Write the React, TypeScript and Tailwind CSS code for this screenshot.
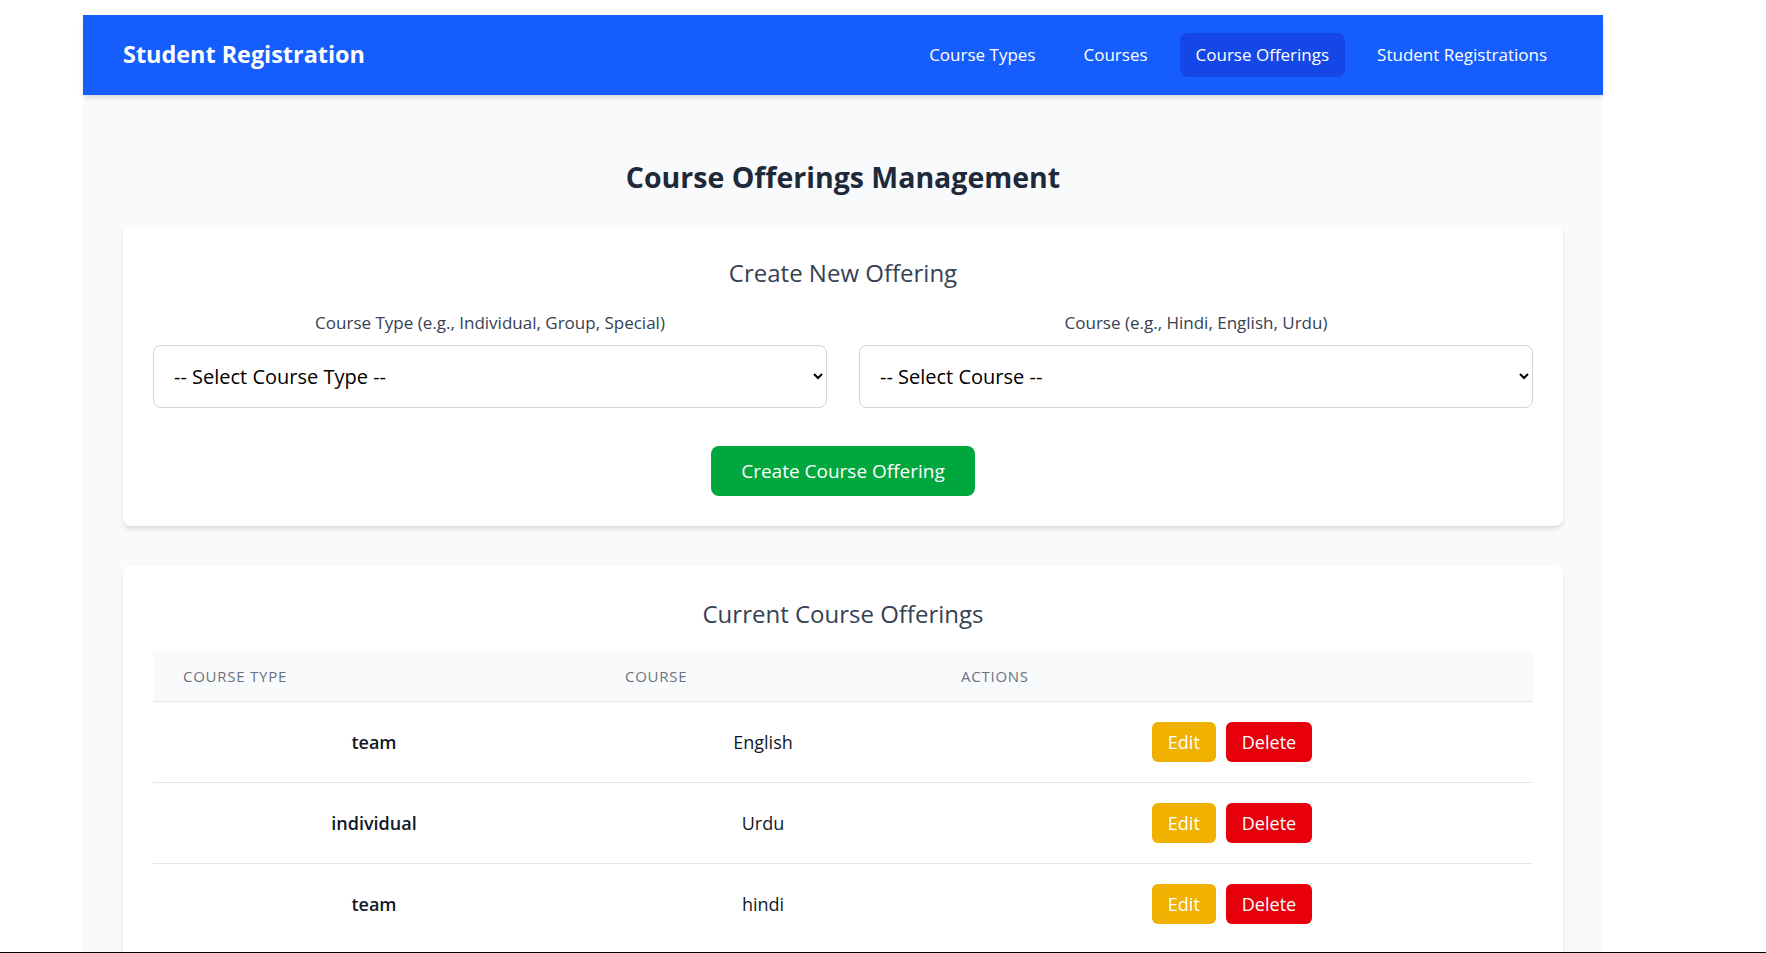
import React from "react";
import clsx from "clsx";

const navLinks = ["Course Types", "Courses", "Course Offerings", "Student Registrations"];

const offerings = [
    { type: "team", course: "English" },
    { type: "individual", course: "Urdu" },
    { type: "team", course: "hindi" },
];

const App: React.FC = () => {
    return (
        <div className="min-h-screen bg-white pl-[83px] pt-[15px] font-['Open_Sans',sans-serif]">
            <div className="w-[1520px] min-h-[938px] bg-gray-50">
                {/* top bar */}
                <nav className="mb-6 flex h-20 items-center justify-between bg-blue-600 px-10 shadow-md">
                    <h1 className="text-[23.4px] font-bold text-white">Student Registration</h1>
                    <ul className="flex items-center gap-4">
                        {navLinks.map((link) => (
                            <li key={link}>
                                <a
                                    href="#"
                                    className={clsx(
                                        "block rounded-lg px-4 py-2 text-[17px] leading-7 font-medium text-white",
                                        link === "Course Offerings" && "bg-blue-700"
                                    )}
                                >
                                    {link}
                                </a>
                            </li>
                        ))}
                    </ul>
                </nav>

                <main className="px-10 pt-10 pb-10">
                    <h2 className="mb-[30px] text-center text-[28.5px] leading-9 font-bold text-gray-800">
                        Course Offerings Management
                    </h2>

                    {/* create form */}
                    <section className="mb-10 rounded-lg bg-white px-[30px] pt-8 pb-[30px] shadow-md">
                        <h3 className="mb-5 text-center text-2xl font-medium text-gray-700">
                            Create New Offering
                        </h3>
                        <div className="grid grid-cols-2 gap-8">
                            <div>
                                <label className="mb-2 block text-center text-[17px] leading-7 font-medium text-gray-700">
                                    Course Type (e.g., Individual, Group, Special)
                                </label>
                                <select className="w-full rounded-lg border border-gray-300 bg-white p-4 text-xl text-black">
                                    <option>-- Select Course Type --</option>
                                </select>
                            </div>
                            <div>
                                <label className="mb-2 block text-center text-[17px] leading-7 font-medium text-gray-700">
                                    Course (e.g., Hindi, English, Urdu)
                                </label>
                                <select className="w-full rounded-lg border border-gray-300 bg-white p-4 text-xl text-black">
                                    <option>-- Select Course --</option>
                                </select>
                            </div>
                        </div>
                        <div className="mt-[38px] flex justify-center">
                            <button className="rounded-lg bg-green-600 px-[30px] py-[11px] text-[19px] leading-7 text-white">
                                Create Course Offering
                            </button>
                        </div>
                    </section>

                    {/* list */}
                    <section className="rounded-lg bg-white px-[30px] pt-8 pb-[30px] shadow-md">
                        <h3 className="mb-[21px] text-center text-2xl font-medium text-gray-700">
                            Current Course Offerings
                        </h3>
                        <table className="w-full">
                            <colgroup>
                                <col className="w-[442px]" />
                                <col className="w-[336px]" />
                                <col />
                            </colgroup>
                            <thead className="border-b border-gray-200 bg-gray-50">
                                <tr>
                                    <th className="px-[30px] py-[15px] text-left text-[15px] leading-5 font-medium uppercase tracking-wider text-gray-500">
                                        Course Type
                                    </th>
                                    <th className="px-[30px] py-[15px] text-left text-[15px] leading-5 font-medium uppercase tracking-wider text-gray-500">
                                        Course
                                    </th>
                                    <th className="px-[30px] py-[15px] text-left text-[15px] leading-5 font-medium uppercase tracking-wider text-gray-500">
                                        Actions
                                    </th>
                                </tr>
                            </thead>
                            <tbody className="divide-y divide-gray-200">
                                {offerings.map((o, i) => (
                                    <tr key={i}>
                                        <td className="px-6 py-5 text-center text-lg font-semibold text-gray-900">
                                            {o.type}
                                        </td>
                                        <td className="px-6 py-5 text-center text-lg text-gray-900">{o.course}</td>
                                        <td className="px-6 py-5">
                                            <div className="flex justify-center gap-[10px]">
                                                <button className="rounded-md bg-yellow-500 px-4 py-1.5 text-lg text-white">
                                                    Edit
                                                </button>
                                                <button className="rounded-md bg-red-600 px-4 py-1.5 text-lg text-white">
                                                    Delete
                                                </button>
                                            </div>
                                        </td>
                                    </tr>
                                ))}
                            </tbody>
                        </table>
                    </section>
                </main>
            </div>
            <div className="fixed inset-x-0 bottom-0 h-px bg-black" />
        </div>
    );
};

export default App;
